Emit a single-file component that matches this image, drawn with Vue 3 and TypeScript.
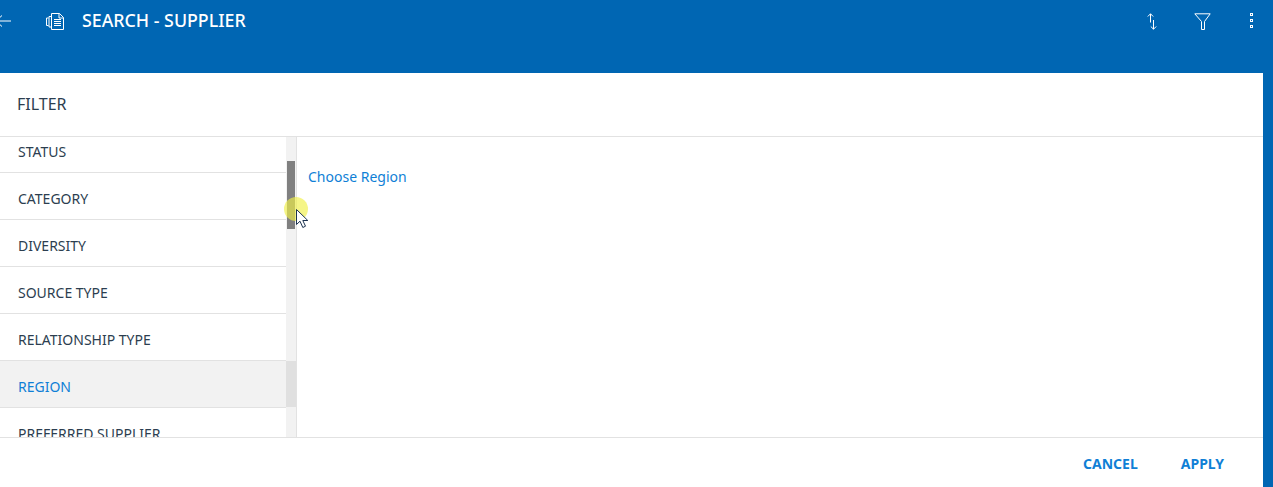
<template>
  <div class="page">
    <header class="top-bar">
      <svg class="back" viewBox="0 0 16 12" aria-hidden="true">
        <path d="M16 6H1M7 .5 1 6l6 5.500" fill="none" stroke="currentColor" />
      </svg>
      <svg class="doc" viewBox="0 0 18 17" aria-hidden="true">
        <path
          d="M5.500.5h8l4 4v12h-12zM13 .5v4.500h4.500M8 6.500h7M8 8.500h7M8 10.500h7M8 12.500h7M5 3.500H3v10.500h2M2.500 5H.5v7.500h2"
          fill="none"
          stroke="currentColor"
        />
      </svg>
      <h1 class="title">SEARCH - SUPPLIER</h1>
      <div class="actions">
        <svg class="sort" viewBox="0 0 10 17" aria-hidden="true">
          <path d="M3.500 9.500V.8M.8 3.500 3.500.8l2.700 2.700M6.500 7v9.200M3.800 13.500l2.700 2.700 2.700-2.700" fill="none" stroke="currentColor" />
        </svg>
        <svg class="funnel" viewBox="0 0 17 17" aria-hidden="true">
          <path d="M.8.8h15.400L10.500 8.500v8H7.500v-8z" fill="none" stroke="currentColor" />
        </svg>
        <div class="dots"><i></i><i></i><i></i></div>
      </div>
    </header>

    <section class="panel">
      <div class="panel-title">FILTER</div>
      <div class="panel-body">
        <ul ref="listEl" class="filter-list">
          <li v-for="item in filters" :key="item" class="filter-row" :class="{ active: item === activeFilter }">
            <span>{{ item }}</span>
          </li>
        </ul>
        <div class="track">
          <div class="thumb"></div>
          <div class="track-mark"></div>
        </div>
        <div class="content">
          <a class="choose">Choose Region</a>
        </div>
      </div>
      <footer class="panel-footer">
        <button class="btn">CANCEL</button>
        <button class="btn">APPLY</button>
      </footer>

      <!-- screen recorder cursor -->
      <div class="cursor-glow"></div>
      <svg class="cursor" viewBox="0 0 13 20" aria-hidden="true">
        <path d="M.5.5v15l3.500-3.300 2.800 6.300 2.700-1.300-2.700-5.700h5z" fill="#fff" stroke="#1c3350" />
      </svg>
    </section>
  </div>
</template>

<script setup lang="ts">
import { onMounted, ref } from 'vue'

const filters = [
  'STATUS',
  'CATEGORY',
  'DIVERSITY',
  'SOURCE TYPE',
  'RELATIONSHIP TYPE',
  'REGION',
  'PREFERRED SUPPLIER'
]
const activeFilter = 'REGION'

const listEl = ref<HTMLElement | null>(null)

onMounted(() => {
  if (listEl.value) listEl.value.scrollTop = 11
})
</script>

<style>
html,
body {
  margin: 0;
  height: 100%;
  overflow: hidden;
  background: #0066b3;
}
</style>

<style scoped>
.page {
  width: 1273px;
  height: 487px;
  display: flex;
  flex-direction: column;
  font-family: "Noto Sans", "Open Sans", sans-serif;
  background: #0066b3;
  overflow: hidden;
}

.top-bar {
  height: 73px;
  flex: none;
  box-sizing: border-box;
  padding: 11px 20px 0 0;
  display: flex;
  align-items: flex-start;
  color: #fff;
}

.back {
  width: 16px;
  height: 12px;
  margin: 4px 0 0 -5px;
  flex: none;
}

.doc {
  width: 18px;
  height: 17px;
  margin: 2px 0 0 35px;
  flex: none;
}

.title {
  margin: -1px 0 0 18px;
  font-size: 17.800px;
  line-height: 20px;
  font-weight: 500;
}

.actions {
  margin-left: auto;
  display: flex;
  align-items: flex-start;
}

.sort {
  width: 10px;
  height: 17px;
  margin-top: 2px;
}

.funnel {
  width: 17px;
  height: 17px;
  margin: 2px 0 0 37px;
}

.dots {
  display: flex;
  flex-direction: column;
  gap: 3px;
  margin: 2px 0 0 39px;
}

.dots i {
  display: block;
  box-sizing: border-box;
  width: 3px;
  height: 3px;
  border: 1px solid #fff;
}

.panel {
  position: relative;
  flex: 1;
  margin-right: 10px;
  display: flex;
  flex-direction: column;
  background: #fff;
  min-height: 0;
}

.panel-title {
  height: 64px;
  box-sizing: border-box;
  flex: none;
  padding: 0 17px 2px;
  display: flex;
  align-items: center;
  font-size: 16px;
  color: #2c3e50;
  border-bottom: 1px solid #e2e2e2;
}

.panel-body {
  flex: 1;
  min-height: 0;
  display: flex;
}

.filter-list {
  width: 286px;
  flex: none;
  margin: 0;
  padding: 0;
  list-style: none;
  overflow: hidden;
}

.filter-row {
  height: 47px;
  box-sizing: border-box;
  padding: 4px 18px 0;
  display: flex;
  align-items: center;
  font-size: 14px;
  color: #2c3e50;
  border-bottom: 1px solid #e2e2e2;
}

.filter-row.active {
  color: #0f7fd6;
  background: #f2f2f2;
}

.track {
  width: 10px;
  flex: none;
  background: #f2f2f2;
  border-right: 1px solid #e2e2e2;
  overflow: hidden;
}

.thumb {
  width: 8px;
  height: 68px;
  margin: 24px 0 0 1px;
  background: #808080;
}

.track-mark {
  height: 46px;
  margin-top: 132px;
  background: #e0e0e0;
}

.content {
  flex: 1;
  padding: 28px 11px;
}

.choose {
  font-size: 14px;
  line-height: 20px;
  color: #0f7fd6;
}

.panel-footer {
  height: 50px;
  box-sizing: border-box;
  flex: none;
  padding-right: 39px;
  display: flex;
  align-items: center;
  justify-content: flex-end;
  gap: 43px;
  border-top: 1px solid #e2e2e2;
}

.btn {
  padding: 2px 0 0;
  border: 0;
  background: none;
  font: 700 14px "Noto Sans", "Open Sans", sans-serif;
  color: #0f7fd6;
}

.cursor-glow {
  position: absolute;
  left: 284px;
  top: 124px;
  width: 24px;
  height: 24px;
  border-radius: 50%;
  background: rgba(240, 240, 70, 0.65);
}

.cursor {
  position: absolute;
  left: 296px;
  top: 136px;
  width: 13px;
  height: 20px;
}
</style>
